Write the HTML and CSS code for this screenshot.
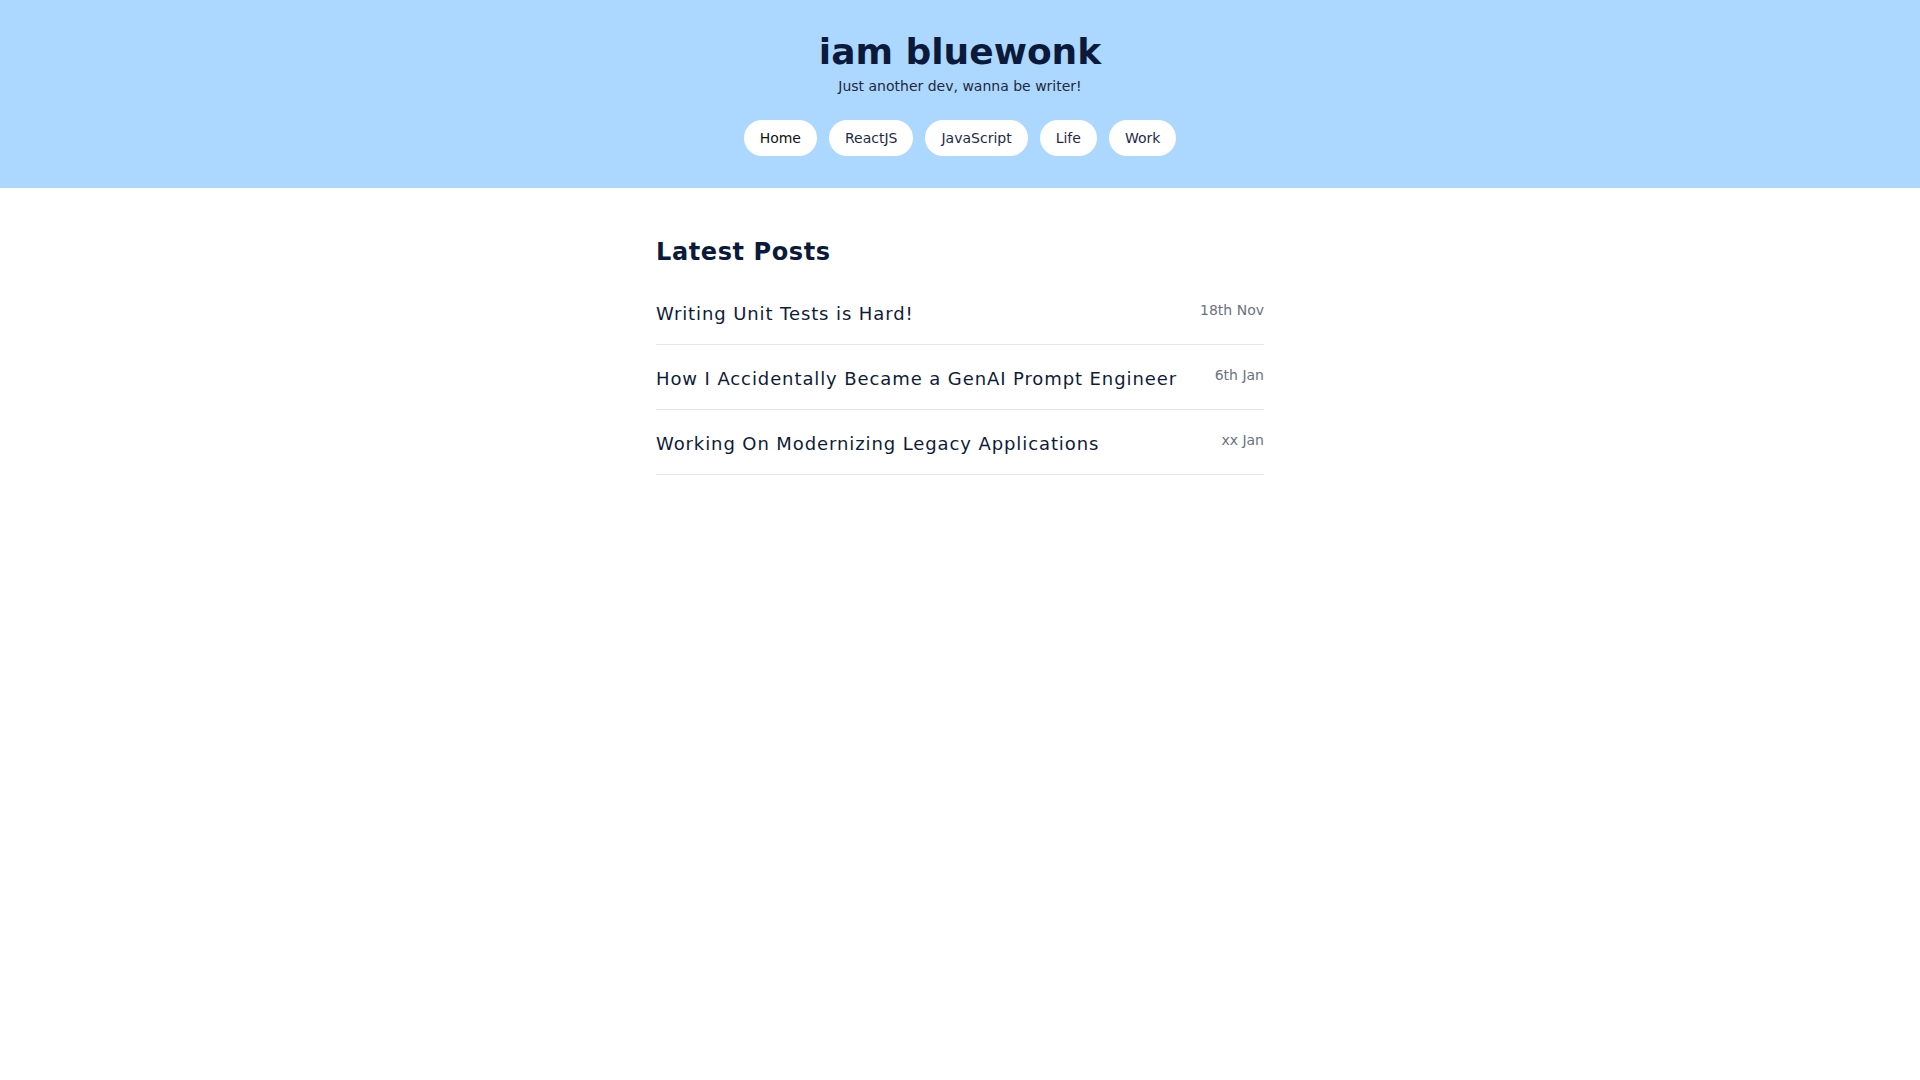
FILE: index.html
```html
<!DOCTYPE html>
<html lang="en">
<head>
<meta charset="utf-8">
<title>iam bluewonk</title>
<link rel="stylesheet" href="styles.css">
</head>
<body>
<header class="site-header">
  <h1 class="site-title">iam bluewonk</h1>
  <p class="site-tagline">Just another dev, wanna be writer!</p>
  <nav class="nav">
    <a class="pill pill-active" href="#">Home</a>
    <a class="pill" href="#">ReactJS</a>
    <a class="pill" href="#">JavaScript</a>
    <a class="pill" href="#">Life</a>
    <a class="pill" href="#">Work</a>
  </nav>
</header>
<main class="content">
  <h2 class="section-title">Latest Posts</h2>
  <ul class="posts">
    <li class="post"><a class="post-title" href="#">Writing Unit Tests is Hard!</a><span class="post-date">18th Nov</span></li>
    <li class="post"><a class="post-title" href="#">How I Accidentally Became a GenAI Prompt Engineer</a><span class="post-date">6th Jan</span></li>
    <li class="post"><a class="post-title" href="#">Working On Modernizing Legacy Applications</a><span class="post-date">xx Jan</span></li>
  </ul>
</main>
</body>
</html>
```
FILE: styles.css
```css
* { box-sizing: border-box; }
html, body { margin: 0; padding: 0; }
body {
  font-family: "DejaVu Sans", Verdana, sans-serif;
  background: #ffffff;
  color: #0f172a;
}
a { text-decoration: none; color: inherit; }

.site-header {
  background: #acd7fe;
  padding: 32px 16px;
  display: flex;
  flex-direction: column;
  align-items: center;
}
.site-title {
  margin: 0;
  font-size: 36px;
  line-height: 40px;
  font-weight: 700;
  color: #0b1a3a;
}
.site-tagline {
  margin: 4px 0 0;
  font-size: 14px;
  line-height: 20px;
  color: #1e293b;
}
.nav {
  margin-top: 24px;
  display: flex;
  gap: 12px;
}
.pill {
  background: #ffffff;
  border-radius: 9999px;
  padding: 8px 16px;
  font-size: 14px;
  line-height: 20px;
  color: #1e2a4a;
}
.pill-active { color: #111111; }

.content {
  max-width: 672px;
  margin: 0 auto;
  padding: 48px 32px;
}
.section-title {
  margin: 0 0 12px;
  font-size: 24px;
  line-height: 32px;
  font-weight: 700;
  color: #0b1a3a;
  letter-spacing: 0.025em;
}
.posts {
  list-style: none;
  margin: 0;
  padding: 0;
}
.post {
  display: flex;
  justify-content: space-between;
  align-items: flex-start;
  gap: 16px;
  padding: 20px 0 16px;
  border-bottom: 1px solid #e5e7eb;
}
.post-title {
  font-size: 18px;
  line-height: 28px;
  letter-spacing: 0.05em;
  color: #0f1b3a;
}
.post-date {
  font-size: 14px;
  line-height: 20px;
  color: #6b7280;
  white-space: nowrap;
}
```
